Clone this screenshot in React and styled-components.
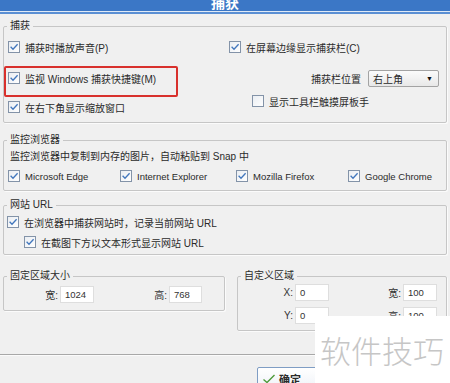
import React from "react";
import styled, { createGlobalStyle } from "styled-components";

const Global = createGlobalStyle`
  html, body { margin: 0; padding: 0; background: #f0f0f0; }
  body { font-family: "Liberation Sans", "Noto Sans CJK SC", sans-serif; font-size: 10px; color: #2a2a2a; }
  * { box-sizing: border-box; }
`;

const Page = styled.div`
  position: relative;
  width: 450px;
  height: 383px;
  overflow: hidden;
  background: #f0f0f0;
`;

const TitleBar = styled.div`
  height: 11px;
  background: #3b77c6;
  overflow: hidden;
  display: flex;
  justify-content: center;
  color: #fff;
  font-family: "Noto Sans CJK SC", sans-serif;
  font-weight: 700;
  font-size: 14px;
  line-height: 4px;
  border-bottom: 1px solid #dfe9f6;
  box-sizing: content-box;
`;

const TitleRule = styled.div`
  height: 2px;
  background: #5b8fd3;
`;

const Content = styled.div`
  padding: 0 3px;
`;

const Group = styled.fieldset`
  margin: ${(p) => p.$mt || 0}px 0 0 0;
  padding: ${(p) => p.$pt || 0}px 0 ${(p) => p.$pb || 0}px 0;
  min-width: 0;
  width: ${(p) => (p.$w ? p.$w + "px" : "auto")};
  border: 1px solid #c6c6c6;
  border-radius: 2px;
  box-shadow: 1px 1px 0 #fbfbfb;
`;

const Legend = styled.legend`
  margin-left: 3px;
  padding: 0 3px;
  line-height: 14px;
  height: 14px;
  font-size: 10px;
  color: #2a2a2a;
`;

const TwoCol = styled.div`
  display: grid;
  grid-template-columns: 225px 1fr;
`;

const Col = styled.div`
  display: flex;
  flex-direction: column;
  align-items: flex-start;
`;

const Row = styled.div`
  display: flex;
  align-items: center;
  height: 14px;
  margin-top: ${(p) => p.$mt || 0}px;
  padding-left: ${(p) => p.$pl || 0}px;
  padding-right: ${(p) => p.$pr || 0}px;
  justify-content: ${(p) => p.$justify || "flex-start"};
  align-self: ${(p) => (p.$stretch ? "stretch" : "auto")};
  gap: ${(p) => p.$gap || 0}px;
  white-space: nowrap;
`;

const Highlight = styled.div`
  margin-top: 12px;
  width: 174px;
  border: 2px solid #d8302c;
  border-radius: 2px;
  padding: 3px 0 10px 2px;
`;

const Label = styled.span`
  margin-left: 5px;
  font-size: ${(p) => p.$fs || 10}px;
`;

const BoxSvg = styled.svg`
  flex: none;
  display: block;
`;

const Check = ({ checked = true }) => (
  <BoxSvg width="12" height="12" viewBox="0 0 12 12">
    <defs>
      <linearGradient id="cbg" x1="0" y1="0" x2="1" y2="1">
        <stop offset="0" stopColor="#e9edf2" />
        <stop offset="1" stopColor="#ffffff" />
      </linearGradient>
    </defs>
    <rect x="0.5" y="0.5" width="11" height="11" fill="url(#cbg)" stroke="#8393a8" />
    {checked && (
      <path d="M2.6 5.8 L5 8.2 L9.6 3.2" fill="none" stroke="#4277bd" strokeWidth="1.3" />
    )}
  </BoxSvg>
);

const Select = styled.div`
  width: 71px;
  height: 17px;
  border: 1px solid #a3a3a3;
  border-radius: 2px;
  background: linear-gradient(#fbfbfb, #e8e8e8);
  display: flex;
  align-items: center;
  justify-content: space-between;
  padding: 0 5px 0 4px;
  font-size: 10px;
`;

const Arrow = styled.span`
  font-size: 7px;
  color: #111;
`;

const Desc = styled.div`
  padding: 3px 0 0 6px;
  line-height: 14px;
  height: 17px;
`;

const BrowserGrid = styled.div`
  margin-top: 5px;
  display: grid;
  grid-template-columns: 112px 116px 112px 1fr;
  padding-left: 4px;
`;

const BottomRow = styled.div`
  display: flex;
  gap: 12px;
  align-items: flex-start;
`;

const FieldGrid = styled.div`
  display: grid;
  grid-template-columns: ${(p) => p.$cols};
  column-gap: 2px;
  row-gap: 6px;
  align-items: center;
`;

const FieldLabel = styled.span`
  text-align: right;
  font-size: 10px;
  color: #333;
`;

const Input = styled.div`
  height: 17px;
  background: #fff;
  border: 1px solid #dedede;
  padding-left: 4px;
  font-size: 9.5px;
  line-height: 15px;
  color: #333;
`;

const Separator = styled.div`
  margin-top: 23px;
  height: 2px;
  border-top: 1px solid #a8a8a8;
  border-bottom: 1px solid #fbfbfb;
`;

const Footer = styled.div`
  padding: 11px 0 0 257px;
`;

const Button = styled.div`
  width: 80px;
  height: 24px;
  border: 1px solid #7f9dc4;
  border-radius: 2px;
  background: linear-gradient(#ffffff, #eef2f7);
  display: flex;
  align-items: center;
  gap: 3px;
  padding-left: 4px;
  font-family: "Noto Sans CJK SC", sans-serif;
  font-weight: 700;
  font-size: 11px;
`;

const Watermark = styled.div`
  position: absolute;
  left: 315px;
  top: 316px;
  right: 0;
  bottom: 0;
  background: #ffffff;
  padding: 15px 0 0 5px;
  font-family: "Noto Sans CJK SC", sans-serif;
  font-weight: 300;
  font-size: 31px;
  line-height: 38px;
  color: #c6c6c6;
  white-space: nowrap;
`;

export default function App() {
  return (
    <Page>
      <Global />
      <TitleBar>捕获</TitleBar>
      <TitleRule />
      <Content>
        <Group $mt={5} $pb={8}>
          <Legend>捕获</Legend>
          <TwoCol>
            <Col>
              <Row $mt={7} $pl={4}>
                <Check />
                <Label>捕获时播放声音(P)</Label>
              </Row>
              <Highlight>
                <Row $pl={0}>
                  <Check />
                  <Label>监视 Windows 捕获快捷键(M)</Label>
                </Row>
              </Highlight>
              <Row $mt={3} $pl={4}>
                <Check />
                <Label>在右下角显示缩放窗口</Label>
              </Row>
            </Col>
            <Col>
              <Row $mt={7}>
                <Check />
                <Label>在屏幕边缘显示捕获栏(C)</Label>
              </Row>
              <Row $mt={16} $stretch $justify="flex-end" $pr={7} $gap={7} style={{ height: 17 }}>
                <span>捕获栏位置</span>
                <Select>
                  <span>右上角</span>
                  <Arrow>▼</Arrow>
                </Select>
              </Row>
              <Row $mt={7} $pl={23}>
                <Check checked={false} />
                <Label>显示工具栏触摸屏板手</Label>
              </Row>
            </Col>
          </TwoCol>
        </Group>

        <Group $mt={10} $pb={7}>
          <Legend>监控浏览器</Legend>
          <Desc>监控浏览器中复制到内存的图片，自动粘贴到 Snap 中</Desc>
          <BrowserGrid>
            {["Microsoft Edge", "Internet Explorer", "Mozilla Firefox", "Google Chrome"].map((b) => (
              <Row key={b}>
                <Check />
                <Label $fs={9.5}>{b}</Label>
              </Row>
            ))}
          </BrowserGrid>
        </Group>

        <Group $mt={7} $pb={5}>
          <Legend>网站 URL</Legend>
          <Row $mt={3} $pl={3}>
            <Check />
            <Label>在浏览器中捕获网站时，记录当前网站 URL</Label>
          </Row>
          <Row $mt={6} $pl={20}>
            <Check />
            <Label>在截图下方以文本形式显示网站 URL</Label>
          </Row>
        </Group>

        <BottomRow>
          <Group $mt={14} $pt={3} $pb={7} $w={222}>
            <Legend>固定区域大小</Legend>
            <FieldGrid $cols="54px 34px 71px 33px">
              <FieldLabel>宽:</FieldLabel>
              <Input>1024</Input>
              <FieldLabel>高:</FieldLabel>
              <Input>768</Input>
            </FieldGrid>
          </Group>
          <Group $mt={14} $pt={1} $pb={6} $w={210}>
            <Legend>自定义区域</Legend>
            <FieldGrid $cols="55px 34px 70px 34px">
              <FieldLabel>X:</FieldLabel>
              <Input>0</Input>
              <FieldLabel>宽:</FieldLabel>
              <Input>100</Input>
              <FieldLabel>Y:</FieldLabel>
              <Input>0</Input>
              <FieldLabel>高:</FieldLabel>
              <Input>100</Input>
            </FieldGrid>
          </Group>
        </BottomRow>
      </Content>
      <Separator />
      <Footer>
        <Button>
          <svg width="14" height="12" viewBox="0 0 14 12">
            <path d="M1.5 6.5 L5 9.5 L12.5 2" fill="none" stroke="#4d9a3a" strokeWidth="1.4" />
          </svg>
          <span>确定</span>
        </Button>
      </Footer>
      <Watermark>软件技巧</Watermark>
    </Page>
  );
}
